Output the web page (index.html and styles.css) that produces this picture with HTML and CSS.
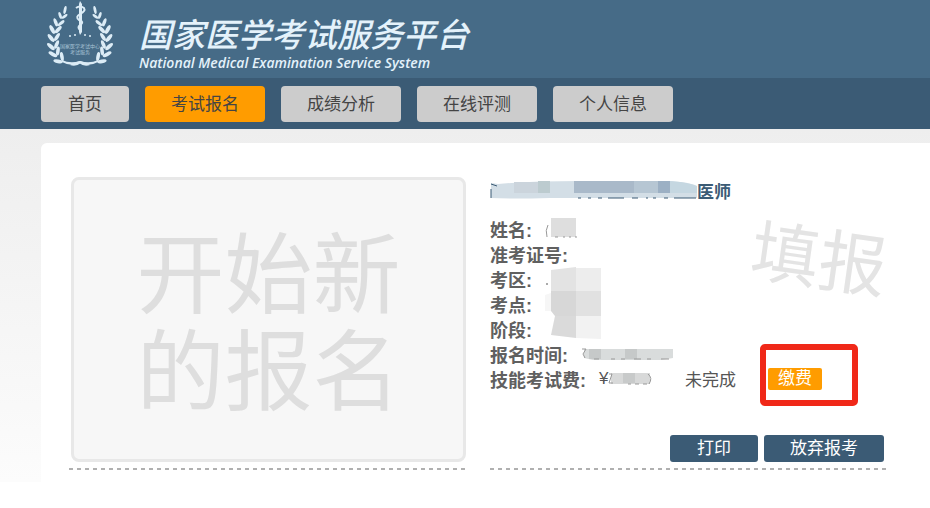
FILE: index.html
```html
<!DOCTYPE html>
<html lang="zh-CN">
<head>
    <meta charset="UTF-8">
    <meta name="viewport" content="width=device-width, initial-scale=1.0">
    <title>国家医学考试服务平台</title>
    <link rel="stylesheet" href="styles.css">
</head>
<body>

<header class="header">
    <svg class="logo" width="66" height="68" viewBox="0 0 66 68" aria-hidden="true">
        <defs>
            <g id="leaf">
                <ellipse cx="-3" cy="-1" rx="1.9" ry="4.8" transform="rotate(-38 -3 -1)"/>
                <ellipse cx="3" cy="-2" rx="1.8" ry="4.6" transform="rotate(32 3 -2)"/>
            </g>
            <g id="branch">
                <ellipse cx="18" cy="10" rx="1.4" ry="4" transform="rotate(12 18 10)"/>
                <use href="#leaf" transform="translate(15 17) rotate(20) scale(.75)"/>
                <use href="#leaf" transform="translate(11 24) rotate(18) scale(.9)"/>
                <use href="#leaf" transform="translate(8 31) rotate(10)"/>
                <use href="#leaf" transform="translate(7 39)"/>
                <use href="#leaf" transform="translate(7 47) rotate(-10)"/>
                <use href="#leaf" transform="translate(9 54) rotate(-24)"/>
                <use href="#leaf" transform="translate(14 60) rotate(-42)"/>
                <path d="M15 60Q23 64 33 61Q40 63 43 65Q37 67 32 63Q24 67 15 62Z"/>
            </g>
        </defs>
        <g fill="#dcecf6">
            <use href="#branch"/>
            <use href="#branch" transform="translate(66 0) scale(-1 1)"/>
            <path d="M33 1L35 4V32L33 35L32 32V4Z"/>
            <path d="M29 8Q33 5 37 8Q39 11 33 14Q28 17 32 20Q38 22 33 25Q30 27 33 30" fill="none" stroke="#dcecf6" stroke-width="2"/>
            <circle cx="23" cy="36" r="1"/>
            <circle cx="28" cy="35" r="1"/>
            <circle cx="38" cy="35" r="1"/>
            <circle cx="43" cy="36" r="1"/>
        </g>
        <g class="logo-text">
            <text x="33" y="48">国家医学考试中心</text>
            <text x="33" y="54">考试服务</text>
        </g>
    </svg>
    <div class="brand">
        <h1>国家医学考试服务平台</h1>
        <p lang="en">National Medical Examination Service System</p>
    </div>
</header>

<nav class="nav">
    <a href="#" class="nav-item">首页</a>
    <a href="#" class="nav-item active">考试报名</a>
    <a href="#" class="nav-item">成绩分析</a>
    <a href="#" class="nav-item">在线评测</a>
    <a href="#" class="nav-item">个人信息</a>
</nav>

<main class="page">
    <div class="content">
        <section class="card">
            <a href="#" class="new-exam">开始新<br>的报名</a>
        </section>

        <section class="card exam">
            <h2>
                <!-- masked exam name -->
                <svg width="207" height="18" viewBox="0 0 207 18" aria-hidden="true">
                    <path d="M1 2L8 3Q40 0 90 0H170Q195 0 207 5V17H60Q20 18 1 17Z" fill="#d3dee6"/>
                    <path d="M24 1H48V12H24Z" fill="#cbd4dc"/>
                    <path d="M48 0H60V12H48Z" fill="#bccbcf"/>
                    <path d="M84 0H144V12H84Z" fill="#a9b9c9"/>
                    <path d="M144 0H168V12H144Z" fill="#b6c6d3"/>
                    <path d="M168 0H180V12H168Z" fill="#9cb0c4"/>
                    <path d="M180 0Q198 1 207 5V12H180Z" fill="#c5d7e1"/>
                    <path d="M1 3L7 5M1 8V17M88 17H91M98 17H101M108 17H112M118 17H134M142 17H148M156 17H158M163 17H166M174 17H178M184 17H206" fill="none" stroke="#3b5b75" stroke-width="1"/>
                </svg><span>医师</span>
            </h2>
            <span class="stamp">填报</span>
            <dl class="info">
                <div class="row">
                    <dt>姓名:</dt>
                    <dd>
                        <svg width="36" height="22" viewBox="0 0 36 22" aria-hidden="true">
                            <path d="M6 0H31V19H6Z" fill="#dedede"/>
                            <path d="M3 7Q0 12 2 19M10 19H13M18 19H20M24 19H26M30 19H32" fill="none" stroke="#999"/>
                        </svg>
                    </dd>
                </div>
                <div class="row">
                    <dt>准考证号:</dt>
                    <dd></dd>
                </div>
                <div class="row">
                    <dt>考区:</dt>
                    <dd>
                        <svg width="56" height="25" viewBox="0 0 56 25" aria-hidden="true">
                            <path d="M6 4L31 1V25H6Z" fill="#e3e3e3"/>
                            <path d="M31 2H56V25H31Z" fill="#ededed"/>
                            <path d="M1 17H3V19H1Z" fill="#aaa"/>
                        </svg>
                    </dd>
                </div>
                <div class="row">
                    <dt>考点:</dt>
                    <dd>
                        <svg width="56" height="25" viewBox="0 0 56 25" aria-hidden="true">
                            <path d="M0 4L6 2V20H0Z" fill="#f6f6f6"/>
                            <path d="M6 0H31V25H10L6 20Z" fill="#d7d7d7"/>
                            <path d="M31 0H56V25H31Z" fill="#e1e1e1"/>
                        </svg>
                    </dd>
                </div>
                <div class="row">
                    <dt>阶段:</dt>
                    <dd>
                        <svg width="56" height="25" viewBox="0 0 56 25" aria-hidden="true">
                            <path d="M10 0H31V22L6 19Z" fill="#dadada"/>
                            <path d="M31 0H56V23L31 22Z" fill="#f2f2f2"/>
                        </svg>
                    </dd>
                </div>
                <div class="row">
                    <dt>报名时间:</dt>
                    <dd>
                        <svg width="92" height="14" viewBox="0 0 92 14" aria-hidden="true">
                            <path d="M3 2H92V11L80 13H12L3 11Z" fill="#d9dcdc"/>
                            <path d="M8 2H20V12H8ZM44 2H56V12H44Z" fill="#c6c9c9"/>
                            <path d="M1 2H5L2 7L4 11M13 12H18M30 12H34M40 12H44M53 12H60M66 12H70M80 12H88" fill="none" stroke="#999"/>
                        </svg>
                    </dd>
                </div>
                <div class="row">
                    <dt>技能考试费:</dt>
                    <dd class="fee">
                        <span class="amount">¥<svg width="46" height="14" viewBox="0 0 46 14" aria-hidden="true">
                            <path d="M3 1H42V12H3Z" fill="#d8d9d9"/>
                            <path d="M15 1H27V11H15Z" fill="#c8caca"/>
                            <path d="M1 2H4L1 11H5M20 12H23M27 12H31M35 12H39M40 2Q45 6 41 12" fill="none" stroke="#999"/>
                        </svg></span>
                        <span class="status">未完成</span>
                        <span class="highlight"><button type="button" class="pay">缴费</button></span>
                    </dd>
                </div>
            </dl>
            <div class="actions">
                <button type="button" class="button">打印</button>
                <button type="button" class="button">放弃报考</button>
            </div>
        </section>
    </div>
</main>

</body>
</html>
```
FILE: styles.css
```css
*, *::after {
    box-sizing: border-box;
}

body {
    margin: 0;
    font-family: "Liberation Sans", "Noto Sans CJK SC", sans-serif;
    font-size: 17px;
    color: #555;
    background-color: #fff;
}

h1, h2, p, dl, dd {
    margin: 0;
}

.header {
    display: flex;
    gap: 26px;
    height: 78px;
    padding-left: 47px;
    background-color: #466b87;
    color: #e4f2fb;
}

.logo-text {
    font-size: 5px;
    text-anchor: middle;
    fill: #a9c3d6;
}

.brand {
    padding-top: 17px;
    font-style: italic;
}

.brand h1 {
    font-size: 33px;
    line-height: 37px;
    font-weight: 500;
}

.brand p {
    font-family: "Open Sans", sans-serif;
    font-size: 14px;
    line-height: 18px;
    font-weight: 600;
}

.nav {
    display: flex;
    gap: 16px;
    padding: 8px 41px 7px;
    background-color: #3b5b75;
}

.nav-item {
    min-width: 88px;
    padding: 1px 26px 0;
    border-radius: 4px;
    background-color: #ccc;
    color: #444;
    line-height: 35px;
    text-align: center;
    text-decoration: none;
}

.nav-item.active {
    background-color: #ff9c00;
}

.page {
    padding: 14px 0 0 41px;
    background: linear-gradient(#eee, #fcfcfc);
}

.content {
    display: grid;
    grid-template-columns: 1fr 1fr;
    gap: 24px;
    padding: 34px 43px 12px 28px;
    border-top-left-radius: 6px;
    background-color: #fff;
}

/* dashed rule under each card */
.card {
    display: flex;
    flex-direction: column;
    padding-bottom: 8px;
    background: repeating-linear-gradient(90deg, #b0b0b0 0 4px, transparent 4px 8px) left bottom / 100% 2px no-repeat;
}

.new-exam {
    margin-left: 2px;
    padding: 47px 0 38px;
    border: 3px solid #e8e8e8;
    border-radius: 8px;
    background-color: #f7f7f7;
    color: #dedede;
    font-size: 88px;
    line-height: 97px;
    text-align: center;
    text-decoration: none;
}

.exam {
    position: relative;
    padding-right: 3px;
}

.exam h2 {
    display: flex;
    align-items: center;
    height: 26px;
    color: #3b5b75;
    font-size: 17px;
}

.stamp {
    position: absolute;
    top: 34px;
    right: 0;
    color: #e4e4e4;
    font-size: 68px;
    line-height: 98px;
    transform: rotate(8deg);
}

.info {
    margin-top: 13px;
}

.row {
    display: flex;
    align-items: center;
    gap: 13px;
    height: 25px;
}

.row dt {
    color: #606060;
    font-size: 18px;
    font-weight: bold;
}

.row svg {
    display: block;
}

.fee {
    display: flex;
    align-items: center;
}

.amount {
    display: flex;
    align-items: center;
    width: 86px;
}

.highlight {
    position: relative;
    display: flex;
    margin-left: 32px;
}

.highlight::after {
    content: "";
    position: absolute;
    top: -24px;
    left: -8px;
    width: 98px;
    height: 62px;
    border: 6px solid #f02818;
    border-radius: 5px;
    pointer-events: none;
}

.pay {
    height: 22px;
    padding: 0 10px;
    border: none;
    border-radius: 2px;
    background-color: #ff9c00;
    color: #fff;
    font: inherit;
    line-height: 22px;
    cursor: pointer;
}

.actions {
    display: flex;
    justify-content: flex-end;
    gap: 6px;
    margin-top: auto;
}

.button {
    min-width: 88px;
    height: 27px;
    padding: 0 26px;
    border: none;
    border-radius: 3px;
    background-color: #3b5b75;
    color: #fff;
    font: inherit;
    line-height: 27px;
    cursor: pointer;
}

.button:hover {
    background-color: #466b87;
}
```
